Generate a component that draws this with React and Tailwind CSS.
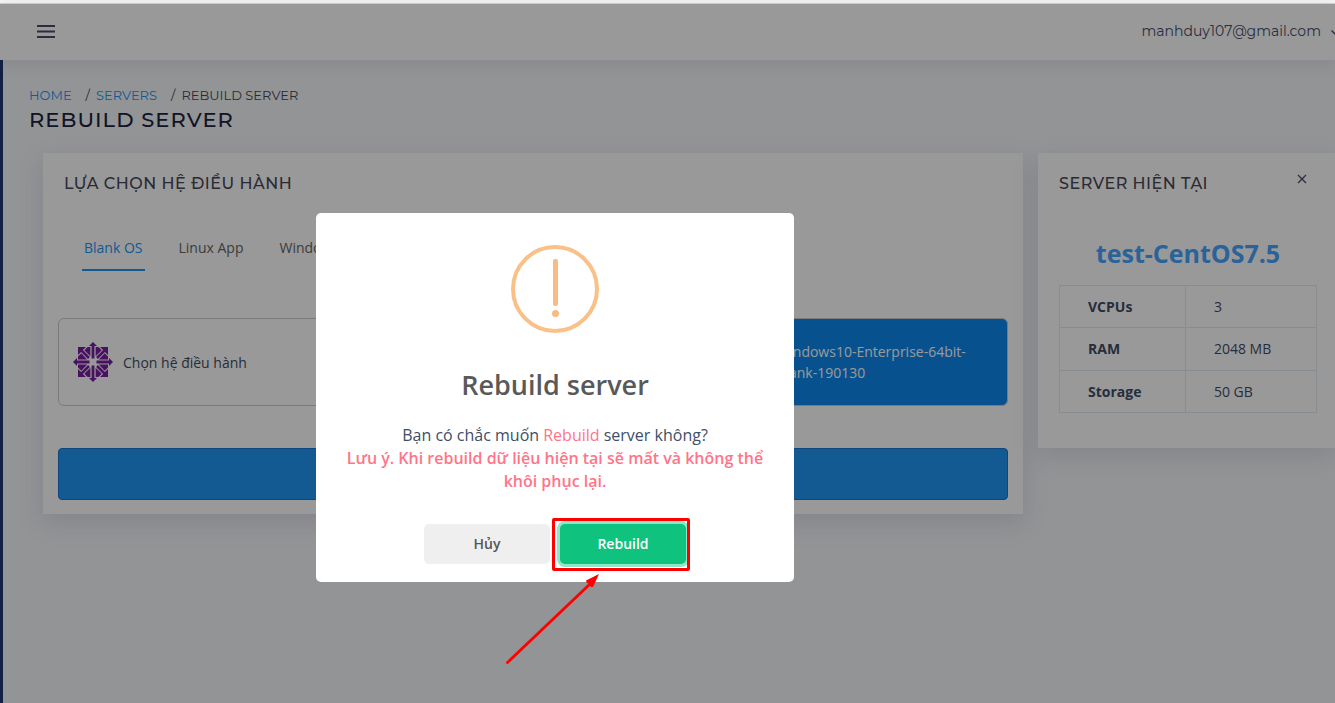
import React from "react";

const montserrat = "font-['Montserrat','Inter',sans-serif]";

function CentosLogo() {
  return (
    <svg viewBox="0 0 40 40" className="h-10 w-10 shrink-0" aria-hidden="true">
      {[0, 90, 180, 270].map((a) => (
        <g key={a} transform={`rotate(${a} 20 20)`} fill="#7b1fa2">
          <path d="M20 0l4 4h-2.6v12.500h-2.800V4H16z" />
          <path d="M5 5h8L9.900 8.100l7 7-1.800 1.800-7-7L5 13z" />
          <path d="M14.600 5h2.800v9.200L11.300 8.300z" />
          <path d="M5 14.600v2.800h9.200L8.300 11.300z" />
        </g>
      ))}
    </svg>
  );
}

function WindowsLogo() {
  return (
    <svg viewBox="0 0 40 40" className="h-10 w-10 shrink-0" fill="#ffffff" aria-hidden="true">
      <path d="M3 8l14-2v13H3zM19 6l18-3v16H19zM3 21h14v13L3 32zM19 21h18v16l-18-3z" />
    </svg>
  );
}

function Topbar() {
  return (
    <header className="relative flex h-14 items-center justify-between bg-white pl-9 text-[#464d69] shadow-[0_2px_18px_1px_rgba(49,53,72,0.12)]">
      <button type="button" aria-label="Menu" className="flex h-5 w-5 items-center">
        <svg viewBox="0 0 20 20" className="h-5 w-5" stroke="currentColor" strokeWidth="1.8">
          <path d="M1 4h18M1 9.5h18M1 15h18" />
        </svg>
      </button>
      <button type="button" className={`-mr-1 flex items-center gap-2.5 pb-0.5 text-sm ${montserrat}`}>
        <span>manhduy107@gmail.com</span>
        <svg viewBox="0 0 8 8" className="h-2 w-2" fill="none" stroke="currentColor" strokeWidth="1.3">
          <path d="M0.5 3.5L4 7l3.5-3.5" />
        </svg>
      </button>
    </header>
  );
}

function Heading() {
  return (
    <div className={`pl-[26px] uppercase ${montserrat}`}>
      <nav aria-label="Breadcrumb" className="flex text-[13px] leading-5 text-[#464855]">
        <a href="#home" className="text-[#2196f3]">Home</a>
        <span className="pr-1.5 pl-3.5">/</span>
        <a href="#servers" className="text-[#2196f3]">Servers</a>
        <span className="pr-1.5 pl-3.5">/</span>
        <span>Rebuild server</span>
      </nav>
      <h1 className="text-[21px] leading-[30px] font-medium tracking-wider text-[#1a2340]">Rebuild server</h1>
    </div>
  );
}

const tabs = ["Blank OS", "Linux App", "Windows App"];

function OsPanel() {
  return (
    <section className="min-w-0 flex-1 bg-white px-[15px] pb-3.5 shadow-[0_8px_24px_2px_rgba(62,57,107,0.12)]">
      <h2 className={`pt-[19px] pl-1.5 text-base leading-6 font-medium tracking-[0.5px] text-[#464855] uppercase ${montserrat}`}>
        Lựa chọn hệ điều hành
      </h2>
      <div role="tablist" className="mt-[41px] flex gap-8 pl-6">
        {tabs.map((t, i) => (
          <button
            key={t}
            type="button"
            role="tab"
            aria-selected={i === 0}
            className={
              i === 0
                ? "border-b-2 border-[#2196f3] px-0.5 pb-2.5 leading-[22px] text-[#2196f3]"
                : "border-b-2 border-transparent px-0.5 pb-2.5 leading-[22px] text-[#666666]"
            }
          >
            {t}
          </button>
        ))}
      </div>
      <div className="mt-[47px] grid grid-cols-3 gap-[30px] leading-[21px]">
        <button type="button" className="flex h-[88px] items-center gap-2.5 rounded-md border border-[#cccccc] px-3.5 text-left">
          <CentosLogo />
          <span>Chọn hệ điều hành</span>
        </button>
        <button type="button" aria-label="Ubuntu" className="h-[88px] rounded-md border border-[#cccccc]" />
        <button type="button" className="flex h-[88px] items-center gap-2.5 rounded-md border border-[#cccccc] bg-[#0d87ef] px-3.5 text-left text-white">
          <WindowsLogo />
          <span>Windows10-Enterprise-64bit-Blank-190130</span>
        </button>
      </div>
      <button
        type="button"
        aria-label="Rebuild server"
        className="mt-[42px] block h-[52px] w-full rounded border border-[#1976d2] bg-[#2196f3]"
      />
    </section>
  );
}

const specs = [
  ["VCPUs", "3"],
  ["RAM", "2048 MB"],
  ["Storage", "50 GB"],
];

function ServerPanel() {
  return (
    <aside className="w-[297px] shrink-0 bg-white pr-[18px] pb-[35px] pl-[21px] shadow-[0_8px_24px_2px_rgba(62,57,107,0.12)]">
      <div className="flex items-start justify-between pt-[19px]">
        <h2 className={`text-base leading-6 font-medium tracking-[0.5px] text-[#464855] uppercase ${montserrat}`}>Server hiện tại</h2>
        <button type="button" aria-label="Đóng" className="mr-2.5 pt-0.5">
          <svg viewBox="0 0 10 10" className="h-2.5 w-2.5" stroke="#464d69" strokeWidth="1.3">
            <path d="M1 1l8 8M9 1l-8 8" />
          </svg>
        </button>
      </div>
      <h3 className="mt-[38px] text-center text-[25px] leading-[38px] font-bold text-[#45a5ff]">test-CentOS7.5</h3>
      <table className="mt-[13px] h-32 w-full border-collapse text-left leading-[21px]">
        <tbody>
          {specs.map(([k, v]) => (
            <tr key={k}>
              <th scope="row" className="w-[49%] border border-[#e3ebf3] pl-7 font-bold">{k}</th>
              <td className="border border-[#e3ebf3] pl-7">{v}</td>
            </tr>
          ))}
        </tbody>
      </table>
    </aside>
  );
}

function ConfirmDialog() {
  return (
    <div className="absolute inset-0 flex items-start justify-center bg-black/40 pt-[209px] pr-[225px]">
      <div role="dialog" aria-modal="true" aria-labelledby="confirm-title" className="w-[478px] rounded-[5px] bg-white pt-8 pb-[18px] text-center">
        <svg viewBox="0 0 88 88" className="mx-auto h-[88px] w-[88px]" aria-hidden="true">
          <circle cx="44" cy="44" r="42" fill="none" stroke="#f9c088" strokeWidth="4" />
          <rect x="42" y="14" width="5" height="47" rx="2" fill="#f8bb86" />
          <circle cx="44.5" cy="68.5" r="3.5" fill="#f8bb86" />
        </svg>
        <h2 id="confirm-title" className="mt-[34px] text-[27px] leading-9 font-semibold text-[#595959]">
          Rebuild server
        </h2>
        <div className="mt-[21px] px-5 text-base leading-[23px] text-[#404e67]">
          <p>
            Bạn có chắc muốn <span className="text-[#ff7588]">Rebuild</span> server không?
          </p>
          <p className="font-semibold text-[#ff7588]">
            Lưu ý. Khi rebuild dữ liệu hiện tại sẽ mất và không thể khôi phục lại.
          </p>
        </div>
        <div className="mt-[31px] flex justify-center gap-2.5 font-semibold">
          <button type="button" className="h-10 w-[126px] rounded-[5px] bg-[#efefef] text-[#555555]">
            Hủy
          </button>
          <div className="relative">
            <button type="button" className="h-10 w-[126px] rounded-[5px] bg-[#0fc27e] text-white ring-3 ring-[#8ce8c8]">
              Rebuild
            </button>
            <div className="pointer-events-none absolute -top-1.5 -right-1 -bottom-[7px] -left-2 rounded-xs border-3 border-[#ff0000]" />
            <svg viewBox="0 0 96 94" className="pointer-events-none absolute top-[49px] -left-[55px] h-[94px] w-24" aria-hidden="true">
              <path d="M2.5 89.500L85 11" fill="none" stroke="#ff0000" strokeWidth="2.8" strokeLinecap="round" />
              <path d="M94 1L81 7.500L81.500 9.500L84 11L86 14L88 14Z" fill="#ff0000" />
            </svg>
          </div>
        </div>
      </div>
    </div>
  );
}

export default function App() {
  return (
    <div className="flex min-h-screen flex-col overflow-hidden bg-white font-['Open_Sans','Noto_Sans',sans-serif] text-sm text-[#404e67]">
      <div className="h-1 border-b border-[#d4d4d4] bg-[#f6f6f6]" />
      <div className="relative flex flex-1 flex-col">
        <Topbar />
        <main className="flex-1 border-l-3 border-[#1e3770] bg-[#f5f7fa] pt-[25px]">
          <Heading />
          <div className="mt-[18px] flex items-start gap-[15px] pl-10">
            <OsPanel />
            <ServerPanel />
          </div>
        </main>
        <ConfirmDialog />
      </div>
    </div>
  );
}
